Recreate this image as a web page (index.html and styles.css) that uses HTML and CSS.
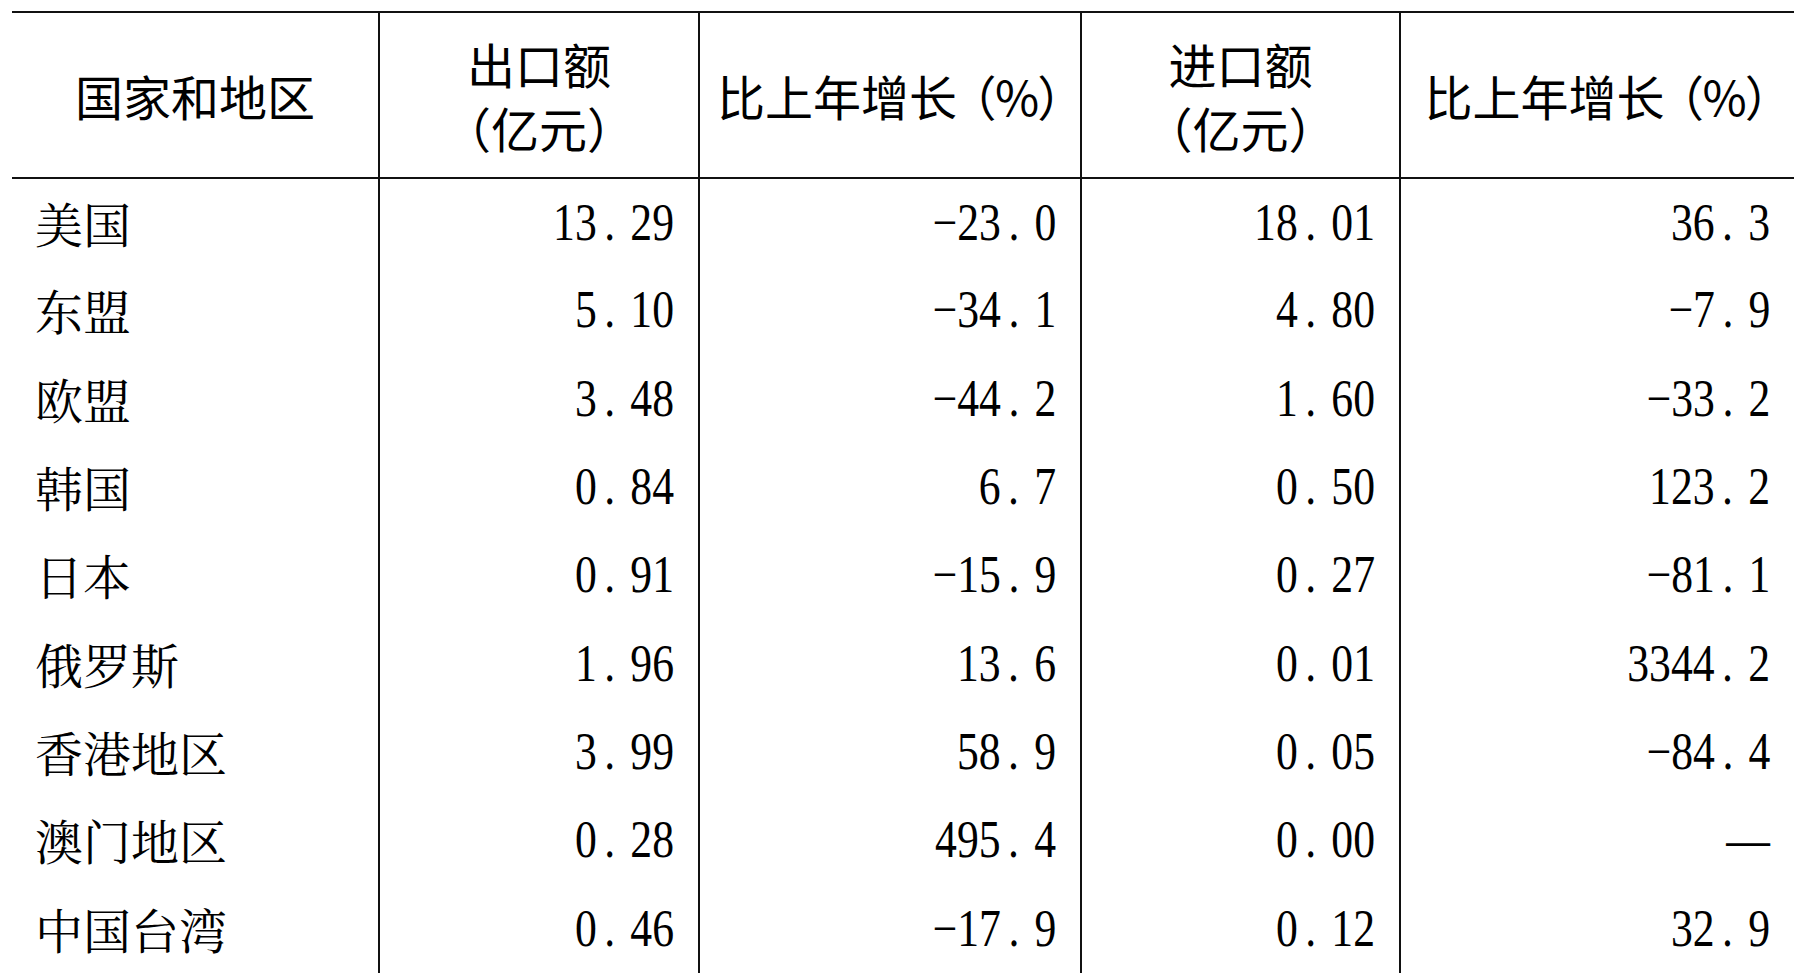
FILE: index.html
```html
<!DOCTYPE html>
<html lang="zh-CN">
<head>
<meta charset="utf-8">
<title>进出口</title>
<link rel="stylesheet" href="styles.css">
</head>
<body>
<table class="trade">
  <colgroup>
    <col class="c-name">
    <col class="c-amt">
    <col class="c-pct">
    <col class="c-amt2">
    <col class="c-pct2">
  </colgroup>
  <thead>
    <tr>
      <th>国家和地区</th>
      <th>出口额<br>（亿元）</th>
      <th class="pct">比上年增长<span class="unit">（%）</span></th>
      <th>进口额<br>（亿元）</th>
      <th class="pct">比上年增长<span class="unit">（%）</span></th>
    </tr>
  </thead>
  <tbody>
    <tr><td class="name">美国</td><td class="val"><span class="num">13<span class="dot">.</span>29</span></td><td class="val"><span class="num">−23<span class="dot">.</span>0</span></td><td class="val"><span class="num">18<span class="dot">.</span>01</span></td><td class="val"><span class="num">36<span class="dot">.</span>3</span></td></tr>
    <tr><td class="name">东盟</td><td class="val"><span class="num">5<span class="dot">.</span>10</span></td><td class="val"><span class="num">−34<span class="dot">.</span>1</span></td><td class="val"><span class="num">4<span class="dot">.</span>80</span></td><td class="val"><span class="num">−7<span class="dot">.</span>9</span></td></tr>
    <tr><td class="name">欧盟</td><td class="val"><span class="num">3<span class="dot">.</span>48</span></td><td class="val"><span class="num">−44<span class="dot">.</span>2</span></td><td class="val"><span class="num">1<span class="dot">.</span>60</span></td><td class="val"><span class="num">−33<span class="dot">.</span>2</span></td></tr>
    <tr><td class="name">韩国</td><td class="val"><span class="num">0<span class="dot">.</span>84</span></td><td class="val"><span class="num">6<span class="dot">.</span>7</span></td><td class="val"><span class="num">0<span class="dot">.</span>50</span></td><td class="val"><span class="num">123<span class="dot">.</span>2</span></td></tr>
    <tr><td class="name">日本</td><td class="val"><span class="num">0<span class="dot">.</span>91</span></td><td class="val"><span class="num">−15<span class="dot">.</span>9</span></td><td class="val"><span class="num">0<span class="dot">.</span>27</span></td><td class="val"><span class="num">−81<span class="dot">.</span>1</span></td></tr>
    <tr><td class="name">俄罗斯</td><td class="val"><span class="num">1<span class="dot">.</span>96</span></td><td class="val"><span class="num">13<span class="dot">.</span>6</span></td><td class="val"><span class="num">0<span class="dot">.</span>01</span></td><td class="val"><span class="num">3344<span class="dot">.</span>2</span></td></tr>
    <tr><td class="name">香港地区</td><td class="val"><span class="num">3<span class="dot">.</span>99</span></td><td class="val"><span class="num">58<span class="dot">.</span>9</span></td><td class="val"><span class="num">0<span class="dot">.</span>05</span></td><td class="val"><span class="num">−84<span class="dot">.</span>4</span></td></tr>
    <tr><td class="name">澳门地区</td><td class="val"><span class="num">0<span class="dot">.</span>28</span></td><td class="val"><span class="num">495<span class="dot">.</span>4</span></td><td class="val"><span class="num">0<span class="dot">.</span>00</span></td><td class="val"><span class="num">—</span></td></tr>
    <tr><td class="name">中国台湾</td><td class="val"><span class="num">0<span class="dot">.</span>46</span></td><td class="val"><span class="num">−17<span class="dot">.</span>9</span></td><td class="val"><span class="num">0<span class="dot">.</span>12</span></td><td class="val"><span class="num">32<span class="dot">.</span>9</span></td></tr>
  </tbody>
</table>
</body>
</html>
```

FILE: styles.css
```css
html, body {
  margin: 0;
  padding: 0;
  background: #fff;
  color: #000;
}

body {
  padding: 11px 2px 0 12px;
  overflow: hidden;
}

.trade {
  border-collapse: collapse;
  table-layout: fixed;
  width: 1782px;
  border-top: 2px solid #111;
}

.c-name { width: 367px; }
.c-amt { width: 320px; }
.c-pct { width: 382px; }
.c-amt2 { width: 319px; }
.c-pct2 { width: 394px; }

.trade th,
.trade td {
  padding: 0;
  border-left: 2px solid #111;
  border-right: 2px solid #111;
  vertical-align: middle;
}

.trade th:first-child,
.trade td:first-child {
  border-left: none;
}

.trade th:last-child,
.trade td:last-child {
  border-right: none;
}

.trade thead tr {
  height: 166px;
}

.trade th {
  font-family: "Noto Sans CJK SC", "Noto Sans", sans-serif;
  font-weight: 400;
  font-size: 48px;
  line-height: 64px;
  text-align: center;
  border-bottom: 2px solid #111;
}

.trade th.pct {
  white-space: nowrap;
}

.unit {
  font-feature-settings: "palt" 1;
  margin-left: 14px;
}

.trade tbody tr {
  height: 88.3px;
}

.name {
  font-family: "Noto Serif CJK SC", "Source Han Serif SC", "Noto Sans CJK SC", serif;
  font-size: 48px;
  line-height: 56px;
  padding-left: 23px !important;
  text-align: left;
}

.val {
  text-align: right;
  padding-right: 24px !important;
}

.num {
  display: inline-block;
  font-family: "Liberation Serif", "DejaVu Serif", serif;
  font-size: 52px;
  line-height: 56px;
  transform: scaleX(0.84);
  transform-origin: 100% 50%;
  white-space: nowrap;
}

.dot {
  margin: 0 18px 0 9px;
}
```
